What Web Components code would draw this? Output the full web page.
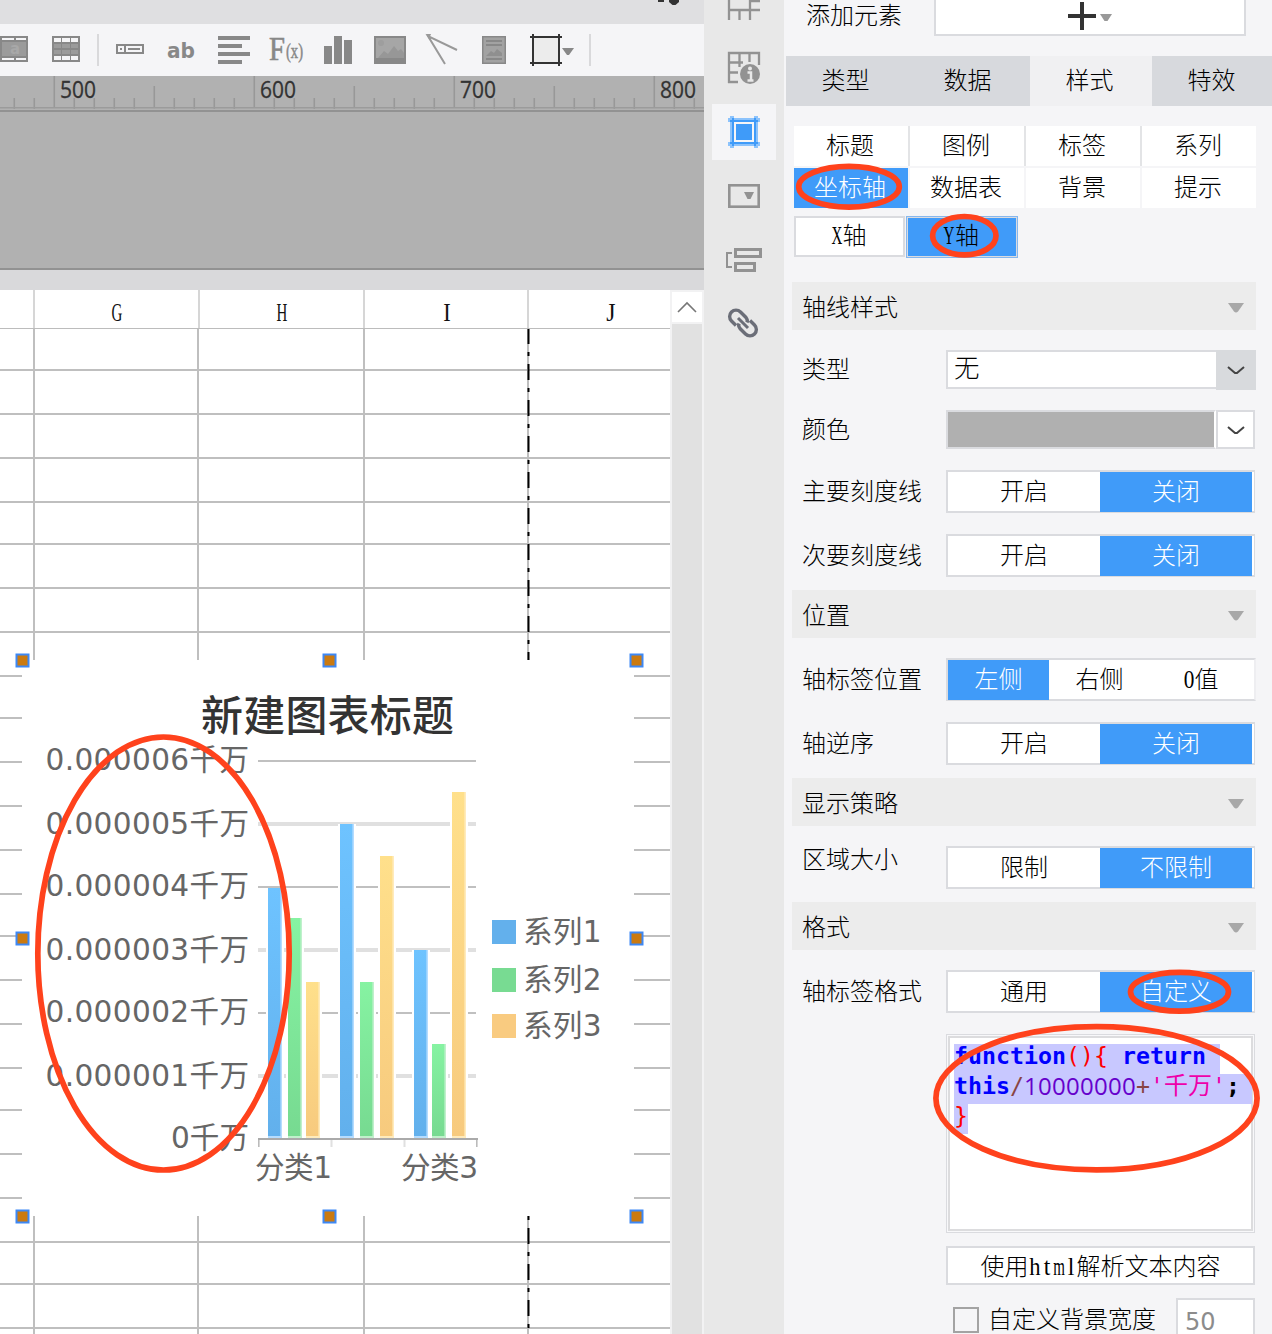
<!DOCTYPE html>
<html lang="zh-CN">
<head>
<meta charset="utf-8">
<title>Report designer</title>
<style>
html,body{margin:0;padding:0}
body{width:1272px;height:1334px;overflow:hidden;background:#f5f5f7;font-family:"Liberation Serif","Noto Sans CJK SC",sans-serif}
</style>
</head>
<body>
<report-designer></report-designer>
<script>
const define = (name, render) => customElements.define(name, class extends HTMLElement {
  constructor() { super(); this.attachShadow({ mode: 'open' }); }
  connectedCallback() { this.shadowRoot.innerHTML = render(this); }
});
const slice = (x, y, w, h, body) => `<svg width="${w}" height="${h}" viewBox="${x} ${y} ${w} ${h}">${body}</svg>`;
const box = (x, y, w, h, f) => `<rect x="${x}" y="${y}" width="${w}" height="${h}" fill="${f}"/>`;
const G = '#888';

/* Half-width latin glyph, 12px advance; k is the horizontal squeeze */
define('half-char', el => {
  const k = +(el.getAttribute('k') || .6), w = 12 / k;
  return `<style>
:host{display:inline-block;width:12px;text-align:left;white-space:nowrap}
span{display:inline-block;width:${w}px;margin-right:${12 - w}px;text-align:center;transform:scaleX(${k});transform-origin:0 50%;font:25px/1 "Liberation Serif",serif}
</style><span><slot></slot></span>`;
});

define('tool-bar', () => {
  let grid = box(52, 36, 28, 26, G);
  for (const x of [54, 62, 71]) grid += box(x, 38, x === 62 ? 8 : 7, 4, '#f5f5f7') + box(x, 44, x === 62 ? 8 : 7, 4, '#9b9b9b') + box(x, 50, x === 62 ? 8 : 7, 4, '#9b9b9b') + box(x, 56, x === 62 ? 8 : 7, 4, '#f5f5f7');
  const icons = [
    [0, 40, box(0, 36, 28, 26, G) + box(2, 38, 12, 2, '#f5f5f7') + box(16, 38, 10, 2, '#f5f5f7') + box(2, 42, 24, 14, '#9b9b9b') + box(2, 58, 12, 2, '#f5f5f7') + box(16, 58, 10, 2, '#f5f5f7') + `<text x="10" y="54" font-family="DejaVu Sans" font-weight="bold" font-size="15" fill="#a8a8a8">a</text>`],
    [40, 50, grid],
    [90, 16, box(97, 34, 2, 32, '#d9d9db')],
    [106, 50, `<path d="M117 45h26v8h-26zM125 45v8" fill="none" stroke="${G}" stroke-width="2"/>` + box(120, 48, 2, 2, G) + box(128, 48, 12, 2, G)],
    [156, 50, `<text x="167" y="58" font-family="DejaVu Sans" font-weight="bold" font-size="22" textLength="28" lengthAdjust="spacingAndGlyphs" fill="${G}">ab</text>`],
    [206, 54, box(218, 36, 32, 4, G) + box(218, 44, 24, 4, G) + box(218, 52, 32, 4, G) + box(218, 60, 24, 4, G)],
    [260, 52, `<g font-family="Liberation Serif" fill="${G}"><text x="269" y="60" font-size="33" stroke="${G}" stroke-width=".6" textLength="16" lengthAdjust="spacingAndGlyphs">F</text><text x="286" y="58" font-size="21" stroke="${G}" stroke-width=".5" textLength="17" lengthAdjust="spacingAndGlyphs">(x)</text></g>`],
    [312, 50, box(324, 46, 8, 18, G) + box(334, 36, 8, 28, G) + box(344, 40, 8, 24, G)],
    [362, 54, box(374, 36, 32, 28, G) + box(376, 38, 28, 20, '#a6a6a6') + `<circle cx="381" cy="43" r="3" fill="#9e9e9e"/><path d="M378 58l6-7 4 3 6-8 4 5 3-2 3 4v5z" fill="#979797"/>`],
    [416, 54, `<path d="M457 50L428 36L445 64" fill="none" stroke="#999" stroke-width="2"/><path d="M426 34h5l-2 5z" fill="#999"/>`],
    [470, 48, box(482, 36, 24, 28, G) + box(483.5, 37.5, 21, 25, '#a2a2a2') + box(486, 40, 16, 2, G) + box(486, 44, 16, 2, G) + box(486, 58, 16, 2, G) + `<path d="M486 56l5-5 3 2 3-4 5 4v3z" fill="#8f8f8f"/>`],
    [518, 62, box(533, 37, 26, 26, '#ececec') + `<path d="M533 34v32M559 34v32M530 37h32M530 63h32" stroke="#333" stroke-width="2"/><path d="M562 48h12l-5 7h-2z" fill="${G}"/>`],
    [580, 20, box(589, 34, 2, 32, '#d9d9db')]
  ];
  return `<style>:host{display:flex;height:52px;background:#f5f5f7}svg{display:block;flex:none}</style>` + icons.map(i => slice(i[0], 24, i[1], 52, i[2])).join('');
});

define('canvas-ruler', () => {
  let s = box(0, 76, 704, 36, '#b1b1b1');
  for (let x = 14; x < 704; x += 20) { const k = (x - 54) % 200; s += box(x - .5, k === 0 ? 76 : Math.abs(k) === 100 ? 86 : 98, 1.6, k === 0 ? 32 : Math.abs(k) === 100 ? 22 : 11, '#989898'); }
  s += box(0, 107, 704, 1.5, '#9b9b9b') + box(0, 110, 704, 2, '#929292');
  [500, 600, 700, 800].forEach((n, i) => s += `<text x="${60 + 200 * i}" y="98" font-family="Open Sans" font-size="23" textLength="36" lengthAdjust="spacingAndGlyphs" fill="#333" stroke="#333" stroke-width=".3">${n}</text>`);
  return `<style>:host,svg{display:block}svg{overflow:visible}</style>` + slice(0, 76, 704, 36, s);
});

define('column-head', () => `<style>
:host{display:flex;height:38px;background:#fff;border-bottom:1px solid #bcbcbc;color:#111}
div{box-sizing:border-box;border-right:2px solid #d6d6d6;display:flex;justify-content:center;align-items:center;width:165px;padding-top:6px}
.first{width:35px}.i{width:164px;padding-left:2px}.last{width:141px;border:0;padding-left:23px}
</style><div class="first"></div><div><half-char>G</half-char></div><div><half-char>H</half-char></div><div class="i"><half-char k=".9">I</half-char></div><div class="last"><half-char k=".95">J</half-char></div>`);

define('sheet-canvas', () => {
  const C = '#bfbfbf'; let s = '';
  const mid = [676, 718, 762, 806, 850, 894, 936, 980, 1024, 1068, 1110, 1154, 1198];
  for (const y of [370, 414, 458, 502, 544, 588, 632, 1242, 1284, 1328]) s += box(0, y - 1, 670, 2, C);
  for (const y of mid) s += box(0, y - 1, 22, 2, C) + box(634, y - 1, 36, 2, C);
  for (const x of [34, 198, 364, 528]) s += box(x - 1, 329, 2, 331, C) + box(x - 1, 1216, 2, 118, C);
  for (const [a, b] of [[328, 660], [1216, 1332]]) for (let y = 328; y < 1334; y += 36) for (const [o, h] of [[0, 16], [24, 4]]) {
    const t = Math.max(a, y + o), e = Math.min(b, y + o + h); if (e > t) s += box(527.5, t, 2, e - t, '#000');
  }
  [761, 824, 887, 950, 1013, 1076].forEach((y, i) => s += i % 2 ? box(258, y - 2, 218, 4, '#e0e0e0') : box(258, y - 1, 218, 2, '#c0c0c0'));
  s += box(258, 1138, 220, 2, '#aaa') + box(258, 1140, 1.6, 7, '#bbb') + box(330.5, 1140, 2, 7, '#e0e0e0') + box(403.5, 1140, 2, 7, '#e0e0e0') + box(476, 1140, 1.6, 7, '#bbb');
  const bars = [[268, 888, 'b'], [288, 918, 'g'], [306, 982, 'y'], [340, 824, 'b'], [360, 982, 'g'], [380, 856, 'y'], [414, 950, 'b'], [432, 1044, 'g'], [452, 792, 'y']];
  const light = { b: '#b4dcff', g: '#c0f0cc', y: '#ffebbc' };
  for (const [x, y, k] of bars) s += box(x - 2, y, 18, 1138 - y, '#fff') + box(x, y, 14, 1138 - y, light[k]) + box(x, y, 12.4, 1136 - y, `url(#${k})`);
  s += `<g font-family="DejaVu Sans, Noto Sans CJK SC, sans-serif" font-size="29.6" fill="#666" font-weight="400">`;
  [770, 834, 896, 960, 1022, 1086, 1148].forEach((y, i) => s += `<text x="${i === 6 ? 171 : 45.5}" y="${y}" textLength="${i === 6 ? 78 : 203.5}">${i === 6 ? '0' : '0.00000' + (6 - i)}千万</text>`);
  s += `<text x="255" y="1178" textLength="77">分类1</text><text x="401" y="1178" textLength="77">分类3</text>`;
  [[920, 942, '#63b0ec'], [968, 990, '#78db92'], [1014, 1036, '#f9cb80']].forEach(([y, t, f], i) => s += box(492, y, 24, 24, f) + `<text x="523" y="${t}" textLength="78.500">系列${i + 1}</text>`);
  s += `</g><text x="201" y="731" font-family="Noto Sans CJK SC, sans-serif" font-weight="500" font-size="42" fill="#333" textLength="253">新建图表标题</text>`;
  for (const x of [22.5, 329.5, 636.5]) for (const y of [660.5, 938.5, 1216.5]) if (!(x === 329.5 && y === 938.5)) s += `<rect x="${x - 6}" y="${y - 6}" width="12" height="12" fill="#cb7a10" stroke="#3d88f5" stroke-width="2"/>`;
  const grad = (id, a, b) => `<linearGradient id="${id}" x1="0" y1="0" x2="0" y2="1"><stop stop-color="${a}"/><stop offset="1" stop-color="${b}"/></linearGradient>`;
  return `<style>:host,svg{display:block}</style>` + slice(0, 329, 670, 1005, `<defs>${grad('b', '#6ec3ff', '#62b0ec')}${grad('g', '#86f3a2', '#77da91')}${grad('y', '#ffe08b', '#f7ca7e')}</defs>` + s);
});

define('scroll-bar', () => `<style>
:host{display:flex;flex-direction:column;width:30px;padding:2px 2px 0;background:#f2f2f3}
.b{height:30px;background:#fff}.t{flex:1;margin-top:2px;background:#e1e1e1}svg{display:block}
</style><div class="b"><svg width="30" height="30"><path d="M6 20l9-9 9 9" fill="none" stroke="#777" stroke-width="1.6"/></svg></div><div class="t"></div>`);

define('side-rail', () => {
  const gr = '#929292';
  const parts = [
    [0, 40, `<path d="M729 0v20M728 10h32M739.500 10v10M750 0v20M750 1h10" fill="none" stroke="${gr}" stroke-width="2.300"/>`],
    [40, 64, `<path d="M729 83V53h30v12M728 62.500h15M739.500 53v14M749.500 53v9M728 72.500h10M728 82h10" fill="none" stroke="${gr}" stroke-width="2.300"/><circle cx="750" cy="74" r="10" fill="${gr}"/><circle cx="750" cy="68.500" r="2" fill="#e8e8e8"/><path d="M747.500 72.500h3.500v7.500M747.500 80.500h6" fill="none" stroke="#e8e8e8" stroke-width="2.500"/>`],
    [104, 56, box(712, 104, 64, 56, '#f5f5f7') + `<path d="M732 116v32M756 116v32M728 120h32M728 144h32" stroke="#8cc3fc" stroke-width="4"/><path d="M733 118v28M755 118v28M730 121h28M730 143h28" stroke="#3f9bf9" stroke-width="2"/>` + box(734, 122, 20, 20, '#f5f5f7') + box(736, 124, 16, 16, '#3f9bf9')],
    [160, 64, `<rect x="729.300" y="185.300" width="29.400" height="21.400" fill="none" stroke="${gr}" stroke-width="2.600"/><path d="M744 192h10l-3.500 7h-3z" fill="${gr}"/>`],
    [224, 64, `<path d="M732 253h-5v14h5" fill="none" stroke="${gr}" stroke-width="2"/><path d="M735.500 249.500h25v7h-25zM735.500 263.500h19v7h-19z" fill="none" stroke="${gr}" stroke-width="3"/>`],
    [288, 1046, `<g fill="none" stroke="#6b6e78" stroke-width="3.400"><path d="M736 325.500l-4.500-4.500a6 6 0 0 1 9-9l5.500 5.500q2 2.500 1 5"/><path d="M750 320.500l4.500 4.500a6 6 0 0 1-9 9l-5.500-5.500q-2-2.500-1-5"/><path d="M738 318l10 10" stroke-width="3"/></g>`]
  ];
  return `<style>:host{display:flex;flex-direction:column;width:80px;background:#e8e8e8}svg{display:block;flex:none}</style>` + parts.map(p => slice(704, p[0], 80, p[1], p[2])).join('');
});

define('section-head', () => `<style>
:host{display:flex;align-items:center;justify-content:space-between;box-sizing:border-box;height:48px;margin:0 16px 20px 8px;padding:3px 12px 0 10px;background:#ececec}
svg{display:block}
</style><span><slot></slot></span><svg width="16" height="10"><path d="M0 0h16l-6 8.500q-2 2-4 0z" fill="#a8a8a8"/></svg>`);

define('form-row', el => `<style>
:host{display:flex;margin:0 0 20px 18px;align-items:stretch}
label{width:144px;flex:none;display:flex;align-items:center;position:relative;top:${el.getAttribute('shift') || 0}px;white-space:nowrap}
</style><label>${el.getAttribute('label') || ''}</label><slot></slot>`);

define('seg-toggle', el => {
  const on = +el.getAttribute('on'), items = el.getAttribute('items').split(',');
  return `<style>
:host{display:flex;box-sizing:border-box;width:${items.length === 3 ? 310 : 309}px;height:43px;border:2px solid #dadbdf;${items.length === 3 ? 'border-right-color:#eeeef1;' : 'border-right-width:1px;padding-right:2px;'}background:#fff}
div{flex:1;display:flex;align-items:center;justify-content:center;padding-bottom:1px;height:39px}
.on{background:#409bf9;color:#fff;height:40px;padding:0}
div:nth-child(n+4){padding-right:3px}
</style>` + items.map((t, i) => `<div class="${i === on ? 'on' : ''}"><span>${t.replace('0', '<half-char k=".85">0</half-char>')}</span></div>`).join('');
});

define('select-box', el => {
  const c = el.hasAttribute('color');
  return `<style>
:host{display:flex;box-sizing:border-box;width:${c ? 309 : 310}px;height:40px}
.v{flex:1;box-sizing:border-box;border:2px solid #dadbdf;border-right:${c ? '2px solid #fff' : '0'};background:${c ? '#b0b0b0' : '#fff'};padding-left:6px;height:39px;line-height:34px;font-size:25.5px}
.a{box-sizing:border-box;width:${c ? 39 : 40}px;display:flex;align-items:center;justify-content:center;padding-top:2px;${c ? 'border:2px solid #dadbdf;background:#fff;height:39px' : 'background:#d8dadd'}}
</style><div class="v"><slot></slot></div><div class="a"><svg width="18" height="12"><path d="M1 2l7 6h2l7-6" fill="none" stroke="#444" stroke-width="2"/></svg></div>`;
});

define('code-area', () => `<style>
:host{display:block;box-sizing:border-box;width:309px;height:199px;border:1.500px solid #dadbdf;padding:1px;background:#f8f8fa}
.in{box-sizing:border-box;height:100%;border:2px solid #dcdcde;background:#fff;padding:6px 0 0 4px;font:23.25px/24px "DejaVu Sans Mono","Noto Sans CJK SC",monospace}
.l{display:flex;box-sizing:border-box;height:30px;white-space:pre;width:max-content;background:#c8c8ff}
.w{width:298px}
b{color:#00f}i{font-style:normal;color:#f00}u{text-decoration:none;color:#844}
.n{color:#60c;font-family:"Open Sans",sans-serif;font-size:24px;letter-spacing:.27px}
.s{color:#e0a;width:76px}.s em{font-style:normal;font-size:24px}strong{color:#000}
</style><div class="in"><div class="l"><b>function</b><i>(){</i><b> return </b></div><div class="l w"><b>this</b><u>/</u><span class="n">10000000</span><u>+</u><span class="s">'<em>千万</em>'</span><strong>;</strong></div><div class="l"><i>}</i></div></div>`);

define('tab-strip', () => `<style>
:host{display:flex;height:50px;margin:0 0 20px 2px;background:#d7d9dd}
div{width:122px;flex:none;display:flex;align-items:center;justify-content:center;box-sizing:border-box;padding:0 3px 1px 0}.on{background:#f0f0f2}
</style><div>类型</div><div>数据</div><div class="on">样式</div><div>特效</div>`);

define('style-grid', () => `<style>
:host{display:grid;grid-template-columns:repeat(4,114px);grid-template-rows:40px 40px;gap:2px;margin:0 16px 8px 10px;background:linear-gradient(#e3e4e6,#e3e4e6) 0 0/100% 40px no-repeat,#f5f5f7;height:82px}
div{box-sizing:border-box;background:#fff;display:flex;align-items:center;justify-content:center;padding-right:2px;height:40px}.on{background:#409bf9;color:#fff}
</style>` + ['标题', '图例', '标签', '系列', '坐标轴', '数据表', '背景', '提示'].map((t, i) => `<div class="${i === 4 ? 'on' : ''}">${t}</div>`).join(''));

define('axis-tabs', () => `<style>
:host{display:flex;margin:0 0 24px 10px;gap:1px;height:42px}
div{box-sizing:border-box;width:111px;height:41px;border:2px solid #dadbdf;background:#fff;display:flex;align-items:center;justify-content:center;padding:0 2px 1px 0}
.on{background:#409bf9;width:112px;height:42px;outline:1px solid #86b7ee;outline-offset:-1px;padding-bottom:3px}
span{display:flex;align-items:center}
</style><div><span><half-char>X</half-char>轴</span></div><div class="on"><span><half-char>Y</half-char>轴</span></div>`);

define('property-panel', () => `<style>
:host{display:block;width:488px;height:1334px;overflow:hidden;background:#f5f5f7;font:300 24px/30px "Liberation Serif","Noto Sans CJK SC",sans-serif;color:#000}
.add{display:flex;height:36px;margin-bottom:20px}
.add span{width:150px;box-sizing:border-box;padding-left:22px;line-height:33px}
.add div{box-sizing:border-box;width:312px;border:2px solid #dadbdf;border-top:0;background:#fff}
svg{display:block}.tight{margin-bottom:12px}
.btn{box-sizing:border-box;width:309px;height:39px;border:2px solid #dadbdf;background:#fff;display:flex;align-items:center;justify-content:center;padding-top:3px}
.btn span{display:flex;align-items:center}
.bg{display:flex;width:309px;height:44px}
.bg i{box-sizing:border-box;width:26px;height:26px;border:2px solid #a3a3a3;background:#f5f5f7;margin:9px 9px 0 7px}
.bg span{line-height:44px;width:188px;white-space:nowrap}
.bg div{box-sizing:border-box;flex:1;border:2px solid #dadbdf;background:#fff;color:#8c8c8c;padding-left:7px;font:24px/44px "DejaVu Sans",sans-serif}
</style>
<div class="add"><span>添加元素</span><div>${slice(936, 0, 308, 34, '<path d="M1068 16h28M1082 2v28" stroke="#333" stroke-width="4"/><path d="M1100 14h12l-4.500 7h-3z" fill="#999"/>')}</div></div>
<tab-strip></tab-strip><style-grid></style-grid><axis-tabs></axis-tabs>
<section-head>轴线样式</section-head>
<form-row label="类型"><select-box>无</select-box></form-row>
<form-row label="颜色"><select-box color></select-box></form-row>
<form-row label="主要刻度线" style="height:44px"><seg-toggle items="开启,关闭" on="1"></seg-toggle></form-row>
<form-row label="次要刻度线" style="height:44px" class="tight"><seg-toggle items="开启,关闭" on="1"></seg-toggle></form-row>
<section-head>位置</section-head>
<form-row label="轴标签位置" style="height:44px"><seg-toggle items="左侧,右侧,0值" on="0"></seg-toggle></form-row>
<form-row label="轴逆序" style="height:44px" class="tight"><seg-toggle items="开启,关闭" on="1"></seg-toggle></form-row>
<section-head>显示策略</section-head>
<form-row label="区域大小" shift="-8" style="height:44px" class="tight"><seg-toggle items="限制,不限制" on="1"></seg-toggle></form-row>
<section-head>格式</section-head>
<form-row label="轴标签格式" style="height:44px"><seg-toggle items="通用,自定义" on="1"></seg-toggle></form-row>
<form-row style="margin-bottom:13px"><code-area></code-area></form-row>
<form-row style="margin-bottom:13px"><div class="btn"><span>使用<half-char k=".9">h</half-char><half-char k=".95">t</half-char><half-char k=".6">m</half-char><half-char k=".95">l</half-char>解析文本内容</span></div></form-row>
<form-row><div class="bg"><i></i><span>自定义背景宽度</span><div>50</div></div></form-row>`);

define('callout-layer', () => `<style>:host{position:absolute;left:0;top:0;pointer-events:none}svg{display:block}</style>` +
  slice(0, 0, 1272, 1334, '<g fill="none" stroke="#ff421c" stroke-width="5.700">' + [[163.500, 953.500, 125.700, 216.500], [849, 186.700, 50.300, 20.400], [964.300, 235.700, 31.700, 19.200], [1179.500, 991.800, 49, 19.400], [1096.500, 1098.200, 160.600, 71.600]].map(e => `<ellipse cx="${e[0]}" cy="${e[1]}" rx="${e[2]}" ry="${e[3]}"/>`).join('') + '</g>'));

define('report-designer', () => `<style>
:host{display:flex;position:relative;width:1272px;height:1334px;overflow:hidden}
.work{width:704px;flex:none}.strip{height:24px;background:#dfdfe1}.gap{height:156px;background:#b1b1b1;border-bottom:2px solid #929292}
.band{height:20px;background:#d9d9db}.sheet{display:flex;height:1044px;background:#fff}.cells{width:670px}
svg{display:block}side-rail,property-panel{flex:none}
</style>
<div class="work"><div class="strip">${slice(0, 0, 704, 24, box(658, 0, 6, 2, '#333') + '<path d="M669 0h10v2l-3.500 3h-3l-3.500-3z" fill="#333"/>')}</div>
<tool-bar></tool-bar><canvas-ruler></canvas-ruler><div class="gap"></div><div class="band"></div>
<div class="sheet"><div class="cells"><column-head></column-head><sheet-canvas></sheet-canvas></div><scroll-bar></scroll-bar></div></div>
<side-rail></side-rail><property-panel></property-panel><callout-layer></callout-layer>`);
</script>
</body>
</html>
